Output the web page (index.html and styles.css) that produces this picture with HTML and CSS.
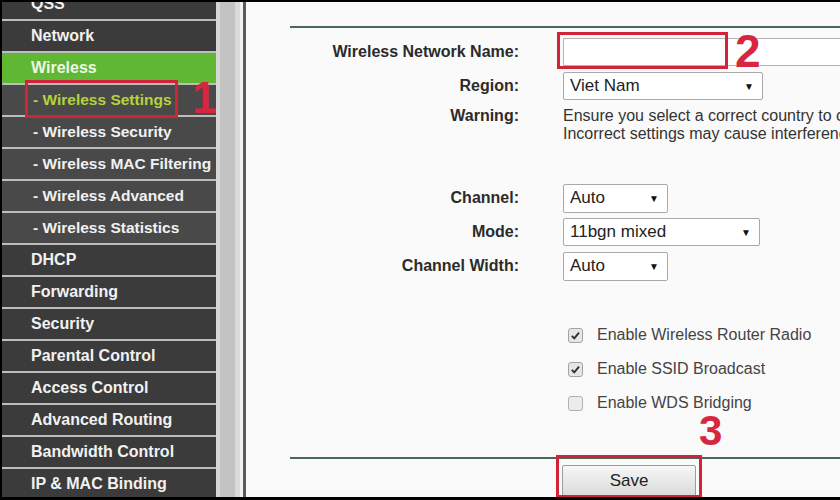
FILE: index.html
```html
<!DOCTYPE html>
<html>
<head>
    <title>Wireless Settings</title>
    <link rel="stylesheet" href="styles.css">
</head>
<body>
    <div class="page">
        <nav class="menu">
            <ul>
                <li>QSS</li>
                <li>Network</li>
                <li class="active">Wireless</li>
                <li class="sub current">- Wireless Settings</li>
                <li class="sub">- Wireless Security</li>
                <li class="sub">- Wireless MAC Filtering</li>
                <li class="sub">- Wireless Advanced</li>
                <li class="sub">- Wireless Statistics</li>
                <li>DHCP</li>
                <li>Forwarding</li>
                <li>Security</li>
                <li>Parental Control</li>
                <li>Access Control</li>
                <li>Advanced Routing</li>
                <li>Bandwidth Control</li>
                <li>IP &amp; MAC Binding</li>
            </ul>
        </nav>
        <div class="scroll"></div>

        <main class="content">
            <div class="rule"></div>

            <div class="row first">
                <label>Wireless Network Name:</label>
                <div class="text-input"></div>
            </div>
            <div class="row">
                <label>Region:</label>
                <div class="select region"><span>Viet Nam</span><span class="arrow">&#9660;</span></div>
            </div>
            <div class="row warning">
                <label>Warning:</label>
                <p>Ensure you select a correct country to conform local law.<br>Incorrect settings may cause interference.</p>
            </div>

            <div class="row channel">
                <label>Channel:</label>
                <div class="select short"><span>Auto</span><span class="arrow">&#9660;</span></div>
            </div>
            <div class="row">
                <label>Mode:</label>
                <div class="select mode"><span>11bgn mixed</span><span class="arrow">&#9660;</span></div>
            </div>
            <div class="row">
                <label>Channel Width:</label>
                <div class="select short"><span>Auto</span><span class="arrow">&#9660;</span></div>
            </div>

            <div class="checks">
                <div class="check">
                    <svg width="15" height="15" viewBox="0 0 15 15"><rect x="0.5" y="0.5" width="14" height="14" rx="2.5" fill="#e6e6e6" stroke="#a3a3a3"/><path d="M3.8 7.8 L6.3 10.3 L11 4.6" fill="none" stroke="#2e2e2e" stroke-width="1.9"/></svg>
                    <span>Enable Wireless Router Radio</span>
                </div>
                <div class="check">
                    <svg width="15" height="15" viewBox="0 0 15 15"><rect x="0.5" y="0.5" width="14" height="14" rx="2.5" fill="#e6e6e6" stroke="#a3a3a3"/><path d="M3.8 7.8 L6.3 10.3 L11 4.6" fill="none" stroke="#2e2e2e" stroke-width="1.9"/></svg>
                    <span>Enable SSID Broadcast</span>
                </div>
                <div class="check">
                    <svg width="15" height="15" viewBox="0 0 15 15"><rect x="0.5" y="0.5" width="14" height="14" rx="2.5" fill="#ececec" stroke="#b0b0b0"/></svg>
                    <span>Enable WDS Bridging</span>
                </div>
            </div>

            <div class="rule bottom"></div>
            <div class="actions">
                <button class="save">Save</button>
            </div>
        </main>

        <!-- annotations drawn over the screenshot -->
        <div class="mark mark-1"></div>
        <span class="num num-1">1</span>
        <div class="mark mark-2"></div>
        <span class="num num-2">2</span>
        <span class="num num-3">3</span>
        <div class="mark mark-3"></div>
    </div>
</body>
</html>
```

FILE: styles.css
```css
body { margin: 0; background: #000; font-family: "Liberation Sans", Arial, sans-serif; overflow: hidden; }
.page { position: relative; width: 840px; height: 495px; margin-top: 2px; display: flex; overflow: hidden; background: #000; }

.menu { width: 214px; flex: none; margin-left: 2px; background: #3b3b3b; overflow: hidden; }
.menu ul { list-style: none; margin: -13px 0 0; padding: 0; }
.menu li { height: 30px; line-height: 30px; border-bottom: 2px solid #bdbdbd; padding-left: 29px; color: #f1f1f1; font-size: 16px; font-weight: bold; white-space: nowrap; background: #3b3b3b; }
.menu li.sub { background: #494949; padding-left: 31px; font-size: 15.5px; }
.menu li.active { background: #5fb733; color: #eef8e6; }
.menu li.current { color: #b4d33c; }

.scroll { width: 30px; flex: none; background: linear-gradient(to right, #d6d6d6 0 4px, #c3c3c3 4px 19px, #dadada 19px 24px, #f2f2f2 24px 27px, #5c5c5c 27px 30px); }

.content { flex: 1; min-width: 0; overflow: hidden; background: #fafafa; padding: 24px 0 0 44px; color: #2d2d2d; }
.rule { height: 2px; background: #4e675b; }
.rule.bottom { margin-top: 37px; }

.row { display: flex; align-items: center; height: 34px; white-space: nowrap; }
.row.first { margin-top: 7px; }
.row label { width: 229px; flex: none; margin-right: 44px; text-align: right; font-size: 16px; font-weight: bold; color: #2b2b2b; }
.row.warning { height: auto; align-items: flex-start; margin-top: 4px; }
.row.warning label { line-height: 18px; }
.row.warning p { margin: 0; font-size: 16px; line-height: 18px; color: #333; }
.row.channel { margin-top: 38px; }

.text-input { flex: none; width: 300px; height: 28px; box-sizing: border-box; border: 1px solid #b3b3b3; background: #fff; }

.select { display: flex; align-items: center; justify-content: space-between; box-sizing: border-box; height: 29px; padding: 0 8px 0 6px; border: 1px solid #a9a9a9; border-radius: 2px; background: #fff; font-size: 17px; color: #222; }
.select .arrow { font-size: 10px; color: #111; }
.select.region { width: 200px; height: 28px; }
.select.short { width: 105px; }
.select.mode { width: 197px; height: 28px; }

.checks { margin-top: 35px; padding-left: 278px; }
.check { display: flex; align-items: center; height: 34px; font-size: 16px; color: #444; white-space: nowrap; }
.check svg { flex: none; margin-right: 14px; }

.actions { padding: 6px 0 0 272px; }
.save { width: 134px; height: 32px; border: 1px solid #9c9c9c; border-radius: 2px; background: linear-gradient(#f7f7f7, #dadada); font-family: "Liberation Sans", Arial, sans-serif; font-size: 17px; color: #222; }

.mark { position: absolute; box-sizing: border-box; border: 3px solid #d2233a; }
.mark-1 { left: 25px; top: 78px; width: 153px; height: 38px; }
.mark-2 { left: 557px; top: 30px; width: 171px; height: 37px; }
.mark-3 { left: 556px; top: 453px; width: 146px; height: 43px; }
.num { position: absolute; font-weight: bold; line-height: 1; color: #d72640; }
.num-1 { left: 192px; top: 74px; font-size: 44px; }
.num-2 { left: 735px; top: 26px; font-size: 46px; text-shadow: 0 0 3px #fff; }
.num-3 { left: 699px; top: 408px; font-size: 42px; }
```
